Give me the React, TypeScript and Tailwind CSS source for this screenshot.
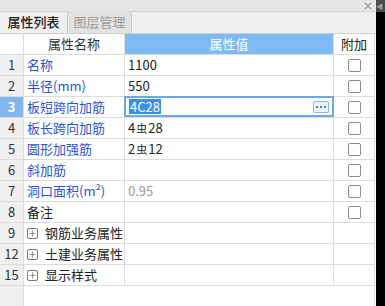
import { Plus } from "lucide-react";

type Row = {
  no: string;
  name: string;
  value?: string;
  kind: "blue" | "plain" | "group";
  check?: boolean;
  muted?: boolean;
  active?: boolean;
};

const rows: Row[] = [
  { no: "1", name: "名称", value: "1100", kind: "blue", check: true },
  { no: "2", name: "半径(mm)", value: "550", kind: "blue", check: true },
  { no: "3", name: "板短跨向加筋", value: "4C28", kind: "blue", check: true, active: true },
  { no: "4", name: "板长跨向加筋", value: "4\u{E000}28", kind: "blue", check: true },
  { no: "5", name: "圆形加强筋", value: "2\u{E000}12", kind: "blue", check: true },
  { no: "6", name: "斜加筋", kind: "blue", check: true },
  { no: "7", name: "洞口面积(m²)", value: "0.95", kind: "blue", check: true, muted: true },
  { no: "8", name: "备注", kind: "plain", check: true },
  { no: "9", name: "钢筋业务属性", kind: "group" },
  { no: "12", name: "土建业务属性", kind: "group" },
  { no: "15", name: "显示样式", kind: "group" },
];

const font = { fontFamily: '"Noto Sans CJK SC", "Noto Sans", sans-serif' };
const cell = "border-r border-b border-[#dcdcdc] h-[21px] flex items-center";

// 钢筋符号 (三级钢)
const Rebar = () => (
  <span className="inline-block mx-[1px] text-[11px] leading-none">虫</span>
);

const renderValue = (v: string) => {
  const parts = v.split("\u{E000}");
  if (parts.length === 1) return v;
  return (
    <>
      {parts[0]}
      <Rebar />
      {parts[1]}
    </>
  );
};

const Check = () => (
  <div className="w-[13px] h-[13px] rounded-[2px] border border-[#8c8c8c] bg-white" />
);

export default function App() {
  return (
    <div className="w-[385px] h-[306px] flex bg-white overflow-hidden text-[13px]" style={font}>
      <div className="w-[376px] flex flex-col">
        {/* title strip */}
        <div className="h-[12px] bg-[#e6e6e6] border-b border-[#d6d6d6] flex justify-end items-center pr-[4px]">
          <svg width="8" height="8" viewBox="0 0 8 8">
            <path d="M1 1L7 7M7 1L1 7" stroke="#9a9a9a" strokeWidth="1.3" />
          </svg>
        </div>

        {/* tabs */}
        <div className="h-[22px] bg-[#f0f0f0] border-b border-[#cfcfcf] flex items-end">
          <div className="h-[22px] w-[67px] flex items-center justify-center text-[#222] font-medium text-[13px]">
            属性列表
          </div>
          <div className="h-[22px] w-[65px] flex items-center justify-center bg-[#e2e2e2] border-x border-[#cdcdcd] text-[#9c9c9c] text-[13px]">
            图层管理
          </div>
        </div>

        {/* grid */}
        <div className="flex-1 relative">
          <div className="grid grid-cols-[24px_101px_209px_41px]">
            <div className={`${cell} bg-white`} />
            <div className={`${cell} justify-center text-[#333]`}>属性名称</div>
            <div className={`${cell} justify-center bg-[#7fbaf4] text-white`}>属性值</div>
            <div className={`${cell} justify-center text-[#222]`}>附加</div>

            {rows.map((r) => (
              <Row key={r.no} r={r} />
            ))}
          </div>
          <div className="absolute left-0 top-[252px] bottom-0 w-[24px] bg-[#f0f0f0] border-r border-[#dcdcdc]" />
          <div className="absolute left-[374px] top-[252px] bottom-0 w-px bg-[#dcdcdc]" />
        </div>
      </div>
      <div className="w-[9px] flex flex-col">
        <div className="h-[12px] bg-[#4a4d50] flex items-center">
          <span className="text-[7px] text-[#9aa0a6] leading-none">◀</span>
        </div>
        <div className="flex-1 bg-black" />
      </div>
    </div>
  );
}

function Row({ r }: { r: Row }) {
  return (
    <>
      <div
        className={`${cell} justify-center ${
          r.active ? "bg-[#80b6ec] text-white font-bold" : "bg-[#f0f0f0] text-[#333]"
        }`}
      >
        {r.no}
      </div>
      <div className={`${cell} pl-[3px] ${r.kind === "blue" ? "text-[#2a52d6]" : "text-[#222]"}`}>
        {r.kind === "group" && (
          <span className="w-[11px] h-[11px] mr-[7px] rounded-[2px] border border-[#777] flex items-center justify-center">
            <Plus size={9} strokeWidth={1.6} color="#555" />
          </span>
        )}
        {r.name}
      </div>
      {r.active ? (
        <div className="border-b border-r border-[#dcdcdc] h-[21px] relative">
          <div className="absolute inset-x-[-1px] top-[-1px] bottom-0 border-2 border-[#6aa8e6] flex items-center pl-[3px] pr-[3px]">
            <span className="bg-[#3d8ee8] text-white leading-[15px] px-[1px]">{r.value}</span>
            <span className="ml-auto w-[16px] h-[12px] rounded-[2px] border border-[#8cb6e8] bg-[#eef4fc] flex items-center justify-center gap-[2px]">
              <i className="w-[2px] h-[2px] bg-[#3a7fd8]" />
              <i className="w-[2px] h-[2px] bg-[#3a7fd8]" />
              <i className="w-[2px] h-[2px] bg-[#3a7fd8]" />
            </span>
          </div>
        </div>
      ) : (
        <div className={`${cell} pl-[3px] ${r.muted ? "text-[#9a9a9a]" : "text-[#222]"}`}>
          {r.value ? renderValue(r.value) : null}
        </div>
      )}
      <div className={`${cell} justify-center`}>{r.check && <Check />}</div>
    </>
  );
}
